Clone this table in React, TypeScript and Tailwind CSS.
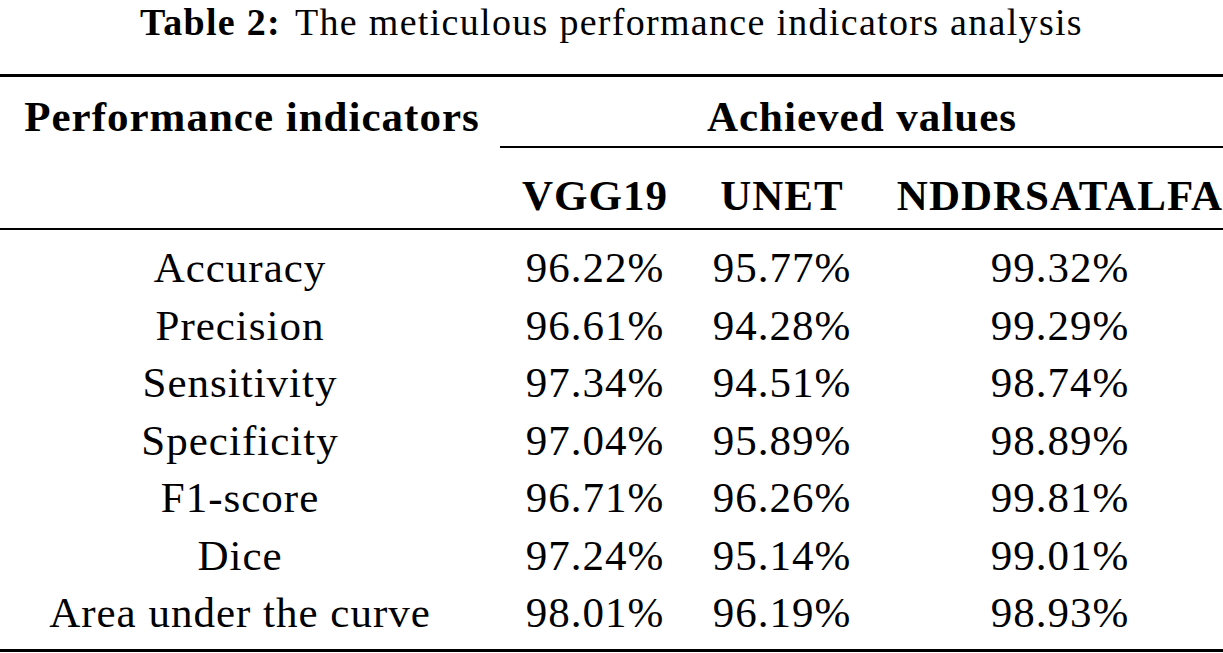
const rows: [string, string, string, string][] = [
  ["Accuracy", "96.22%", "95.77%", "99.32%"],
  ["Precision", "96.61%", "94.28%", "99.29%"],
  ["Sensitivity", "97.34%", "94.51%", "98.74%"],
  ["Specificity", "97.04%", "95.89%", "98.89%"],
  ["F1-score", "96.71%", "96.26%", "99.81%"],
  ["Dice", "97.24%", "95.14%", "99.01%"],
  ["Area under the curve", "98.01%", "96.19%", "98.93%"],
];

export default function App() {
  return (
    <div className="h-[653px] w-[1223px] overflow-hidden bg-white text-black font-['Liberation_Serif',serif]">
      {/* caption */}
      <p className="h-[74px] pt-[2px] text-center text-[38px] leading-[40px] tracking-[1.3px]">
        <span className="font-bold">Table 2:</span>
        <span className="ml-[14px]">The meticulous performance indicators analysis</span>
      </p>

      <div className="grid w-[1266px] grid-cols-[480px_230px_144px_412px] text-center text-[43px] tracking-[1px]">
        <div className="col-span-4 h-[3px] bg-black" />

        {/* header row 1 */}
        <div className="h-[69px] pt-[11px] pl-[24px] font-bold leading-[57px]">Performance indicators</div>
        <div className="col-span-3 h-[69px] pt-[11px] pr-[22px] font-bold leading-[57px]">Achieved values</div>

        <div />
        <div className="col-span-3 ml-[20px] h-[2px] bg-black" />

        {/* header row 2 */}
        <div className="h-[80px]" />
        <div className="h-[80px] pt-[19px] font-bold leading-[57px]">VGG19</div>
        <div className="h-[80px] pt-[19px] font-bold leading-[57px]">UNET</div>
        <div className="h-[80px] pt-[19px] font-bold leading-[57px]">NDDRSATALFA</div>

        <div className="col-span-4 h-[2px] bg-black" />
        <div className="col-span-4 h-[9px]" />

        {rows.map((r) => (
          <div key={r[0]} className="contents">
            {r.map((c, i) => (
              <div key={i} className="h-[57.5px] leading-[57.5px]">
                {c}
              </div>
            ))}
          </div>
        ))}

        <div className="col-span-4 h-[7px]" />
        <div className="col-span-4 h-[3px] bg-black" />
      </div>
    </div>
  );
}
